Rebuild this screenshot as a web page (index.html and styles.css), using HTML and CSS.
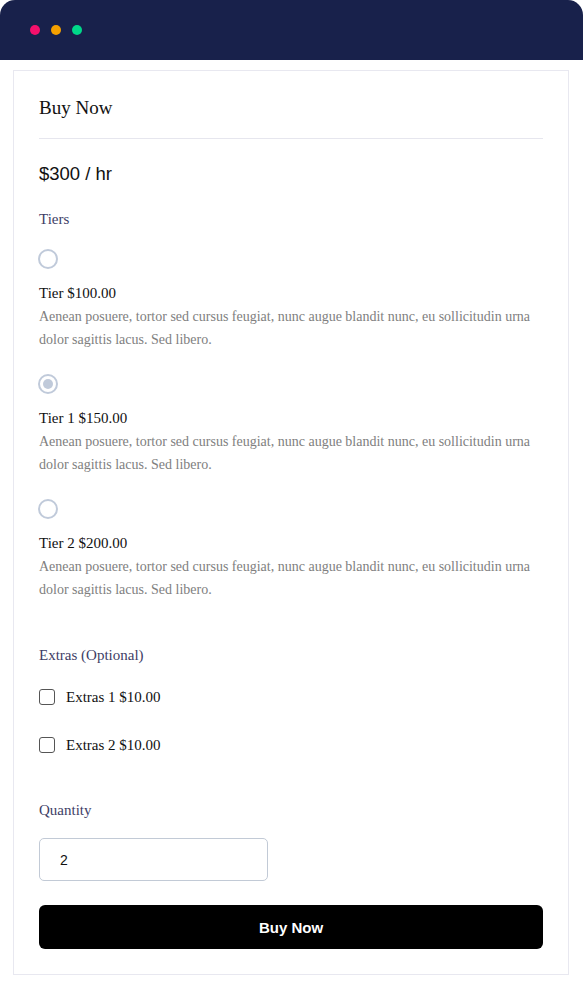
FILE: index.html
```html
<!DOCTYPE html>
<html>
<head>
<meta charset="utf-8">
<link rel="stylesheet" href="styles.css">
</head>
<body>
<div class="topbar">
  <span class="dot dot-red"></span>
  <span class="dot dot-orange"></span>
  <span class="dot dot-green"></span>
</div>
<div class="card">
  <h1 class="title">Buy Now</h1>
  <div class="divider"></div>
  <div class="price">$300 / hr</div>

  <div class="label tiers-label">Tiers</div>
  <div class="tiers">
    <div class="tier">
      <span class="radio"></span>
      <div class="tier-name">Tier $100.00</div>
      <p class="tier-desc">Aenean posuere, tortor sed cursus feugiat, nunc augue blandit nunc, eu sollicitudin urna dolor sagittis lacus. Sed libero.</p>
    </div>
    <div class="tier">
      <span class="radio checked"></span>
      <div class="tier-name">Tier 1 $150.00</div>
      <p class="tier-desc">Aenean posuere, tortor sed cursus feugiat, nunc augue blandit nunc, eu sollicitudin urna dolor sagittis lacus. Sed libero.</p>
    </div>
    <div class="tier">
      <span class="radio"></span>
      <div class="tier-name">Tier 2 $200.00</div>
      <p class="tier-desc">Aenean posuere, tortor sed cursus feugiat, nunc augue blandit nunc, eu sollicitudin urna dolor sagittis lacus. Sed libero.</p>
    </div>
  </div>

  <div class="label extras-label">Extras (Optional)</div>
  <div class="extras">
    <div class="extra"><span class="checkbox"></span><span>Extras 1 $10.00</span></div>
    <div class="extra"><span class="checkbox"></span><span>Extras 2 $10.00</span></div>
  </div>

  <div class="label qty-label">Quantity</div>
  <div class="qty-input">2</div>
  <button class="buy-btn">Buy Now</button>
</div>
</body>
</html>
```
FILE: styles.css
```css
* { box-sizing: border-box; }
html, body { margin: 0; padding: 0; background: #ffffff; }
body { font-family: "Liberation Serif", "Times New Roman", serif; color: #111; }

.topbar {
  height: 60px;
  background: #18214b;
  border-radius: 15px 15px 0 0;
  display: flex;
  align-items: center;
  gap: 11px;
  padding-left: 30px;
}
.dot { width: 10px; height: 10px; border-radius: 50%; display: block; }
.dot-red { background: #f4106c; }
.dot-orange { background: #f5a000; }
.dot-green { background: #00d889; }

.card {
  margin: 10px 14px 0 13px;
  border: 1px solid #e8e8f0;
  padding: 25px 25px 25px 25px;
}
.title {
  margin: 0;
  font-weight: normal;
  font-size: 19px;
  line-height: 24px;
  color: #111;
}
.divider { height: 1px; background: #e6e6ee; margin-top: 18px; }
.price {
  margin-top: 23px;
  font-family: "Liberation Sans", Arial, sans-serif;
  font-size: 18.5px;
  line-height: 24px;
  color: #111;
}
.label {
  font-size: 15px;
  line-height: 20px;
  color: #3e3e66;
}
.tiers-label { margin-top: 23px; }
.tiers { margin-top: 20px; display: flex; flex-direction: column; gap: 23px; }
.tier { display: flex; flex-direction: column; align-items: flex-start; }
.radio {
  width: 20px; height: 20px;
  border: 2px solid #c0cada;
  border-radius: 50%;
  display: flex; align-items: center; justify-content: center;
  margin-left: -1px;
}
.radio.checked::after {
  content: "";
  width: 10px; height: 10px;
  border-radius: 50%;
  background: #c0cada;
}
.tier-name {
  margin-top: 13px;
  font-size: 15px;
  line-height: 22px;
  color: #111;
}
.tier-desc {
  margin: 1px 0 0;
  font-size: 14px;
  line-height: 23px;
  color: #808080;
}
.extras-label { margin-top: 44px; }
.extras { margin-top: 22px; display: flex; flex-direction: column; gap: 28px; }
.extra {
  display: flex; align-items: center; gap: 11px;
  height: 20px;
  font-size: 15px;
  color: #111;
}
.checkbox {
  width: 16px; height: 16px;
  border: 1px solid #555;
  border-radius: 3px;
  display: block;
}
.qty-label { margin-top: 45px; }
.qty-input {
  margin-top: 18px;
  width: 229px;
  height: 43px;
  border: 1px solid #c2cad6;
  border-radius: 5px;
  padding-left: 20px;
  display: flex; align-items: center;
  font-family: "Liberation Sans", Arial, sans-serif;
  font-size: 14px;
  color: #111;
}
.buy-btn {
  margin-top: 24px;
  width: 100%;
  height: 44px;
  background: #000;
  color: #fff;
  border: none;
  border-radius: 6px;
  font-family: "Liberation Sans", Arial, sans-serif;
  font-weight: bold;
  font-size: 15px;
  display: block;
}
```
